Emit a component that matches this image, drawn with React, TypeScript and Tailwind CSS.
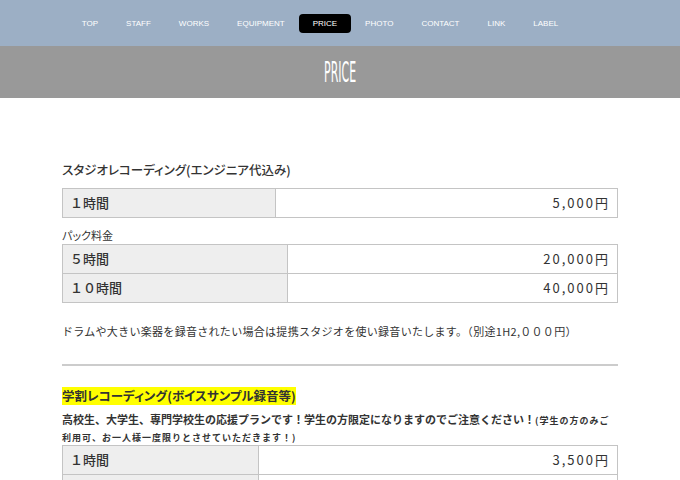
import React from "react";

const navItems = ["TOP", "STAFF", "WORKS", "EQUIPMENT", "PRICE", "PHOTO", "CONTACT", "LINK", "LABEL"];

type Row = { label: string; price: string };

const PriceTable = ({ rows, labelWidth }: { rows: Row[]; labelWidth: string }) => (
  <table className="w-full border-collapse border border-[#c4c4c4] [font-feature-settings:normal]">
    <tbody>
      {rows.map((row) => (
        <tr key={row.label} className="h-[29px]">
          <td
            className={`${labelWidth} border border-[#c4c4c4] bg-[#eeeeee] pl-[7px] text-[13px] font-medium text-[#333]`}
          >
            {row.label}
          </td>
          <td className="border border-[#c4c4c4] pr-[7px] text-right text-[13px] tracking-[2px] text-[#333]">
            {row.price}
          </td>
        </tr>
      ))}
    </tbody>
  </table>
);

export default function App() {
  return (
    <div className="min-h-[480px] bg-white font-['Noto_Sans_CJK_JP',sans-serif] text-[#333]">
      <nav className="flex h-[46px] items-center justify-center bg-[#9cafc5] pr-[40px]">
        {navItems.map((item) => (
          <a
            key={item}
            className={`rounded-[4px] px-[14px] py-[5px] font-['Liberation_Sans',sans-serif] text-[8px] leading-[9px] text-white ${
              item === "PRICE" ? "bg-black" : ""
            }`}
          >
            {item}
          </a>
        ))}
      </nav>

      <div className="flex h-[52px] items-center justify-center bg-[#999999]">
        <h1 className="scale-x-[0.42] font-['DejaVu_Sans_Condensed',sans-serif] text-[29px] leading-none text-white">
          PRICE
        </h1>
      </div>

      <main className="mx-auto w-[556px] pt-[64px] [font-feature-settings:'palt']">
        <h2 className="text-[12.5px] font-medium leading-[16px]">スタジオレコーディング(エンジニア代込み)</h2>

        <div className="mt-[10px]">
          <PriceTable rows={[{ label: "１時間", price: "5,000円" }]} labelWidth="w-[213px]" />
        </div>

        <p className="mb-[2px] mt-[10px] text-[11px] leading-[14px]">パック料金</p>
        <PriceTable
          rows={[
            { label: "５時間", price: "20,000円" },
            { label: "１０時間", price: "40,000円" },
          ]}
          labelWidth="w-[225px]"
        />

        <p className="mt-[20px] text-[11px] leading-[16px] tracking-[0.3px] [font-feature-settings:normal]">
          ドラムや大きい楽器を録音されたい場合は提携スタジオを使い録音いたします。（別途1H2,０００円）
        </p>

        <hr className="mt-[25px] border-t-2 border-[#cccccc]" />

        <h3 className="mt-[21px] inline-block bg-[#ffff00] text-[12.5px] font-bold leading-[18px]">
          学割レコーディング(ボイスサンプル録音等)
        </h3>

        <p className="mt-[5px] text-[11px] font-bold leading-[17px] [font-feature-settings:normal]">
          高校生、大学生、専門学校生の応援プランです！学生の方限定になりますのでご注意ください！
          <span className="text-[9px] leading-none tracking-[1px]">
            (学生の方のみご利用可、お一人様一度限りとさせていただきます！)
          </span>
        </p>

        <PriceTable
          rows={[
            { label: "１時間", price: "3,500円" },
            { label: "３時間", price: "9,000円" },
          ]}
          labelWidth="w-[196px]"
        />
      </main>
    </div>
  );
}
